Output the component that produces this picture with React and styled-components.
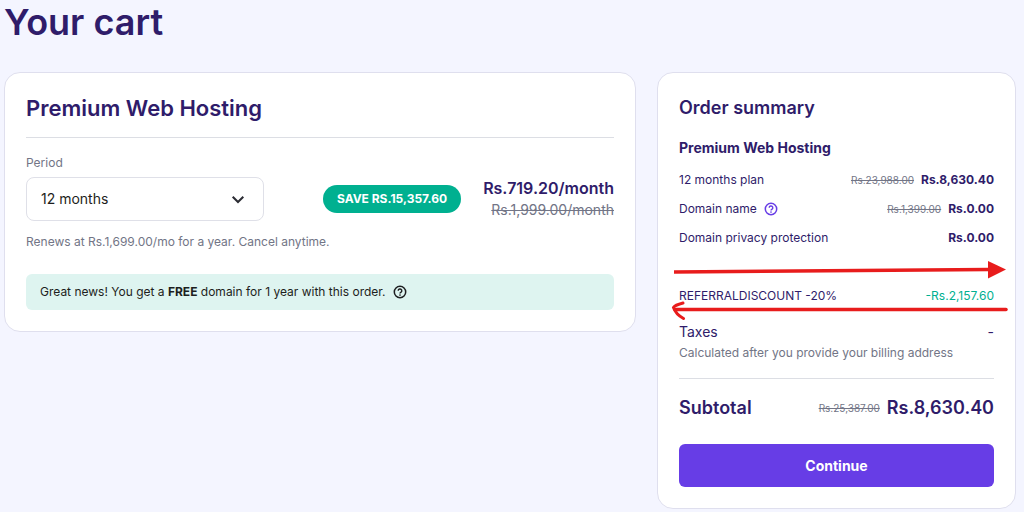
import React from "react";
import styled, { createGlobalStyle } from "styled-components";

const ink = "#2f1c6a";
const muted = "#727586";

const GlobalStyle = createGlobalStyle`
  *, *::before, *::after { box-sizing: border-box; }
  body {
    margin: 0;
    background: #f4f5ff;
    color: ${ink};
    font-family: Inter, "Liberation Sans", sans-serif;
    font-size: 12px;
    line-height: 20px;
  }
`;

const Page = styled.main`
  padding: 0 8px 0 4px;
`;

const PageTitle = styled.h1`
  margin: 0;
  padding-bottom: 28px;
  font-size: 36px;
  line-height: 44px;
  font-weight: 600;
`;

const Columns = styled.div`
  display: grid;
  grid-template-columns: 632fr 359fr;
  gap: 21px;
  align-items: start;
`;

const Card = styled.section`
  min-width: 0;
  padding: 21px;
  background: #fff;
  border: 1px solid #dfdfee;
  border-radius: 16px;
`;

const CardTitle = styled.h2`
  margin: 0;
  font-size: ${(p) => (p.$large ? 22 : 18)}px;
  line-height: 28px;
  font-weight: 600;
`;

const Divider = styled.hr`
  height: 1px;
  margin: 15px 0;
  border: 0;
  background: #dcdee4;
`;

const PeriodLabel = styled.label`
  display: block;
  margin-bottom: 4px;
  color: ${muted};
`;

const PeriodRow = styled.div`
  display: flex;
  align-items: center;
  gap: 22px;
`;

const SelectBox = styled.div`
  position: relative;
  flex: 0 1 238px;
  margin-right: auto;

  svg {
    position: absolute;
    top: 12px;
    right: 16px;
    pointer-events: none;
  }
`;

const Select = styled.select`
  appearance: none;
  display: block;
  width: 100%;
  height: 44px;
  padding: 0 44px 0 14px;
  border: 1px solid #dfe0e8;
  border-radius: 8px;
  background: #fff;
  color: #1d1e20;
  font: inherit;
  font-size: 14px;
`;

const SaveBadge = styled.span`
  padding: 4px 14px;
  border-radius: 14px;
  background: #00b090;
  color: #fff;
  font-size: 12px;
  font-weight: 700;
  white-space: nowrap;
`;

const MonthlyPrice = styled.div`
  display: flex;
  flex-direction: column;
  align-items: flex-end;
  line-height: 22px;
  white-space: nowrap;
`;

const Price = styled.strong`
  font-size: ${(p) => p.$size || 12}px;
  font-weight: ${(p) => (p.$size ? 600 : 700)};
`;

const OldPrice = styled.s`
  color: ${muted};
  font-size: ${(p) => p.$size || 10}px;
`;

const Note = styled.p`
  margin: ${(p) => p.$top || 0}px 0 0;
  color: ${muted};
`;

const Banner = styled.div`
  display: flex;
  align-items: center;
  gap: 6px;
  margin-top: 22px;
  padding: 8px 14px;
  border-radius: 6px;
  background: #def4f0;
  color: #1d1e20;
`;

const HelpButton = styled.button`
  display: inline-flex;
  padding: 0;
  border: 0;
  background: none;
  color: ${(p) => p.$color};
  cursor: pointer;
`;

const ProductName = styled.h3`
  margin: 16px 0 12px;
  font-size: 14px;
  line-height: 20px;
  font-weight: 700;
`;

const Lines = styled.div`
  display: flex;
  flex-direction: column;
  gap: 9px;
`;

const Line = styled.div`
  display: flex;
  align-items: center;
  justify-content: space-between;
  white-space: nowrap;
`;

const LineLabel = styled.span`
  display: flex;
  align-items: center;
  gap: 6px;
`;

const Amounts = styled.span`
  display: flex;
  align-items: center;
  gap: 7px;
`;

const DiscountLine = styled(Line)`
  position: relative;
  margin: 38px 0 15px;
`;

const Discount = styled.span`
  color: #00b090;
`;

const Arrows = styled.svg`
  position: absolute;
  top: -26px;
  left: -8px;
  width: calc(100% + 24px);
  height: 60px;
  pointer-events: none;
`;

const TaxLine = styled(Line)`
  font-size: 14px;
  line-height: 22px;
`;

const ContinueButton = styled.button`
  display: block;
  width: 100%;
  height: 43px;
  margin-top: 22px;
  border: 0;
  border-radius: 6px;
  background: #673de6;
  color: #fff;
  font: inherit;
  font-size: 14px;
  font-weight: 700;
  cursor: pointer;
`;

function Help({ color, label }) {
  return (
    <HelpButton type="button" $color={color} aria-label={label}>
      <svg width="16" height="16" viewBox="0 0 16 16" fill="none" stroke="currentColor">
        <circle cx="8" cy="8" r="5.7" strokeWidth="1.5" />
        <path d="M6.200 6.800a1.800 1.800 0 1 1 2.700 1.500c-.6.4-.9.6-.9 1.200" strokeWidth="1.400" />
        <circle cx="8" cy="11" r=".85" fill="currentColor" stroke="none" />
      </svg>
    </HelpButton>
  );
}

export default function App() {
  return (
    <Page>
      <GlobalStyle />
      <PageTitle>Your cart</PageTitle>
      <Columns>
        <Card>
          <CardTitle $large>Premium Web Hosting</CardTitle>
          <Divider />
          <PeriodLabel htmlFor="period">Period</PeriodLabel>
          <PeriodRow>
            <SelectBox>
              <Select id="period" defaultValue="12">
                <option value="12">12 months</option>
              </Select>
              <svg width="20" height="20" viewBox="0 0 20 20" fill="none" stroke="#2b2c33" strokeWidth="2">
                <path d="M4.700 7.700l5.300 5.300 5.300-5.300" />
              </svg>
            </SelectBox>
            <SaveBadge>SAVE RS.15,357.60</SaveBadge>
            <MonthlyPrice>
              <Price $size={16}>Rs.719.20/month</Price>
              <OldPrice $size={14}>Rs.1,999.00/month</OldPrice>
            </MonthlyPrice>
          </PeriodRow>
          <Note $top={11}>Renews at Rs.1,699.00/mo for a year. Cancel anytime.</Note>
          <Banner>
            <span>
              Great news! You get a <strong>FREE</strong> domain for 1 year with this order.
            </span>
            <Help color="#1d1e20" label="About the free domain" />
          </Banner>
        </Card>

        <Card>
          <CardTitle>Order summary</CardTitle>
          <ProductName>Premium Web Hosting</ProductName>
          <Lines>
            <Line>
              <span>12 months plan</span>
              <Amounts>
                <OldPrice>Rs.23,988.00</OldPrice>
                <Price>Rs.8,630.40</Price>
              </Amounts>
            </Line>
            <Line>
              <LineLabel>
                Domain name
                <Help color="#673de6" label="About the domain name" />
              </LineLabel>
              <Amounts>
                <OldPrice>Rs.1,399.00</OldPrice>
                <Price>Rs.0.00</Price>
              </Amounts>
            </Line>
            <Line>
              <span>Domain privacy protection</span>
              <Price>Rs.0.00</Price>
            </Line>
          </Lines>
          <DiscountLine>
            <span>REFERRALDISCOUNT -20%</span>
            <Discount>-Rs.2,157.60</Discount>
            <Arrows viewBox="0 0 339 60" preserveAspectRatio="none" fill="none" stroke="#e81c1c" aria-hidden="true">
              <path d="M3 12L318 9.500" strokeWidth="3.500" />
              <path d="M317 1l18 8.500-18 9z" fill="#e81c1c" stroke="none" />
              <path d="M335 49.500H4" strokeWidth="3.500" strokeLinecap="round" />
              <path d="M12 43C8 44 4 45 2.500 47.500C4 52 8 56 12.500 58.500" strokeWidth="3" strokeLinecap="round" />
            </Arrows>
          </DiscountLine>
          <TaxLine>
            <span>Taxes</span>
            <span>-</span>
          </TaxLine>
          <Note>Calculated after you provide your billing address</Note>
          <Divider />
          <Line>
            <CardTitle as="span">Subtotal</CardTitle>
            <Amounts>
              <OldPrice>Rs.25,387.00</OldPrice>
              <Price $size={18}>Rs.8,630.40</Price>
            </Amounts>
          </Line>
          <ContinueButton type="button">Continue</ContinueButton>
        </Card>
      </Columns>
    </Page>
  );
}
